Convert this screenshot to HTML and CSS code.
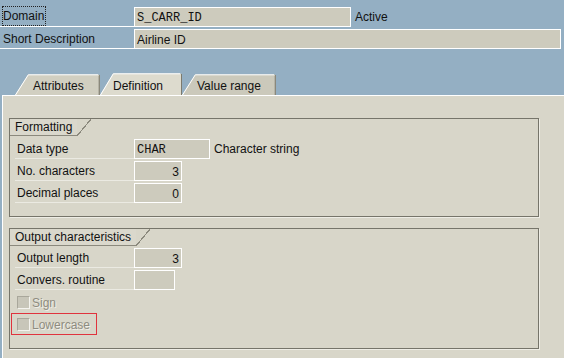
FILE: index.html
```html
<!DOCTYPE html>
<html>
<head>
<meta charset="utf-8">
<link rel="stylesheet" href="styles.css">
</head>
<body>
<div class="header">
  <div class="hrow">
    <div class="hlabel"><span class="focus">Domain</span></div>
    <div class="field mono w-domain">S_CARR_ID</div>
    <div class="status">Active</div>
  </div>
  <div class="hrow">
    <div class="hlabel">Short Description</div>
    <div class="field w-desc">Airline ID</div>
  </div>
</div>

<div class="tabs">
  <div class="tab inactive w-attr">
    <svg class="tab-bg" width="85" height="21" viewBox="0 0 85 21">
      <polygon points="0,21 13,0.5 84,0.5 84,21" fill="#d1cfc1"/>
      <polyline points="0.5,21 13.3,0.8 83,0.8" fill="none" stroke="#ffffff" stroke-width="1"/>
      <line x1="84.5" y1="1" x2="84.5" y2="21" stroke="#8a887b"/>
      <line x1="83.5" y1="2" x2="83.5" y2="21" stroke="#b5b3a6"/>
    </svg>
    <span class="tab-text">Attributes</span>
  </div>
  <div class="tab active w-def">
    <svg class="tab-bg" width="82" height="22" viewBox="0 0 82 22">
      <polygon points="0,22 13,0.5 81,0.5 81,22" fill="#dddbce"/>
      <polyline points="0.5,22 13.3,0.8 80,0.8" fill="none" stroke="#ffffff" stroke-width="1"/>
      <line x1="81.5" y1="1" x2="81.5" y2="22" stroke="#7c7a6e"/>
    </svg>
    <span class="tab-text">Definition</span>
  </div>
  <div class="tab inactive w-val">
    <svg class="tab-bg" width="94" height="21" viewBox="0 0 94 21">
      <polygon points="0,21 13,0.5 93,0.5 93,21" fill="#cbc9bb"/>
      <polyline points="0.5,21 13.3,0.8 92,0.8" fill="none" stroke="#ffffff" stroke-width="1"/>
      <line x1="93.5" y1="1" x2="93.5" y2="21" stroke="#8a887b"/>
      <line x1="92.5" y1="2" x2="92.5" y2="21" stroke="#b5b3a6"/>
    </svg>
    <span class="tab-text">Value range</span>
  </div>
</div>

<div class="panel">
  <div class="group g-format">
    <div class="gtitle">Formatting</div>
    <div class="rows">
      <div class="row">
        <div class="label">Data type</div>
        <div class="field mono in-w-type">CHAR</div>
        <div class="desc">Character string</div>
      </div>
      <div class="row">
        <div class="label">No. characters</div>
        <div class="field num in-w-num">3</div>
      </div>
      <div class="row">
        <div class="label">Decimal places</div>
        <div class="field num in-w-num">0</div>
      </div>
    </div>
  </div>

  <div class="group g-output">
    <div class="gtitle">Output characteristics</div>
    <div class="rows">
      <div class="row">
        <div class="label">Output length</div>
        <div class="field num in-w-num">3</div>
      </div>
      <div class="row">
        <div class="label">Convers. routine</div>
        <div class="field in-w-conv"></div>
      </div>
      <div class="check-row">
        <span class="checkbox"></span><span class="check-text">Sign</span>
      </div>
      <div class="check-row highlighted">
        <span class="checkbox"></span><span class="check-text">Lowercase</span>
      </div>
    </div>
  </div>
</div>
</body>
</html>
```

FILE: styles.css
```css
html, body {
  margin: 0;
  padding: 0;
}

body {
  width: 564px;
  height: 358px;
  overflow: hidden;
  background: #94afc3;
  font-family: "Liberation Sans", Arial, sans-serif;
  font-size: 12px;
  color: #111;
}

.header {
  padding-top: 7px;
  display: flex;
  flex-direction: column;
  gap: 2px;
}

.hrow {
  display: flex;
  align-items: stretch;
  height: 20px;
}

.hlabel {
  box-sizing: border-box;
  width: 134px;
  height: 20px;
  border-bottom: 1px solid #ffffff;
  padding-left: 3px;
  line-height: 21px;
}

.focus {
  display: inline-block;
  box-sizing: border-box;
  height: 20px;
  border: 1px dotted #222;
  line-height: 19px;
  padding: 0 1px 0 0;
  margin-top: -1px;
  margin-left: -1px;
  vertical-align: top;
}

.field {
  box-sizing: border-box;
  height: 20px;
  border: 1px solid #ffffff;
  background: #cdcbbd;
  padding: 0 2px;
  line-height: 20px;
  white-space: nowrap;
  overflow: hidden;
}

.mono {
  font-family: "Liberation Mono", "Courier New", monospace;
  font-size: 12px;
}

.num {
  text-align: right;
}

.w-domain { width: 217px; }
.w-desc { width: 427px; }

.status {
  padding-left: 4px;
  line-height: 21px;
}

/* Tabs */
.tabs {
  margin-top: 24px;
  padding-left: 15px;
  height: 22px;
  display: flex;
  align-items: flex-end;
}

.tab {
  position: relative;
  display: flex;
  align-items: flex-start;
}

.tab.inactive { height: 21px; }
.tab.active { height: 22px; }

.tab-bg {
  position: absolute;
  left: 0;
  top: 0;
  display: block;
}

.tab-text {
  position: relative;
  line-height: 20px;
  padding-top: 2px;
}

.tab.active .tab-text {
  padding-top: 3px;
}

.w-attr { width: 85px; }
.w-attr .tab-text { padding-left: 18px; }
.w-def { width: 82px; }
.w-def .tab-text { padding-left: 13px; }
.w-val { width: 94px; }
.w-val .tab-text { padding-left: 15px; }

/* Panel */
.panel {
  margin-left: 2px;
  box-sizing: border-box;
  height: 263px;
  background: #d8d6c9;
  border-top: 1px solid #ffffff;
  border-left: 1px solid #ffffff;
  padding: 22px 0 0 6px;
}

.group {
  box-sizing: border-box;
  width: 530px;
  border: 1px solid #76756a;
  box-shadow: 1px 1px 0 #eeede5;
  padding-bottom: 13px;
}

.g-output {
  margin-top: 11px;
}

.gtitle {
  position: relative;
  display: inline-block;
  height: 16px;
  line-height: 17px;
  padding: 0 19px 0 5px;
  border-bottom: 1px solid #8b897d;
  background: #dad8cc;
}

.gtitle::after {
  content: "";
  position: absolute;
  right: 0;
  top: 0;
  width: 14px;
  height: 17px;
  background: linear-gradient(to bottom right, #d8d6c9 calc(50% - 0.6px), #8b897d calc(50% - 0.6px), #8b897d calc(50% + 0.6px), #d8d6c9 calc(50% + 0.6px));
}

.rows {
  margin-top: 3px;
  display: flex;
  flex-direction: column;
  gap: 2px;
}

.g-output .rows {
  margin-top: 2px;
}

.row {
  display: flex;
  height: 20px;
  align-items: stretch;
}

.label {
  box-sizing: border-box;
  width: 119px;
  margin-left: 5px;
  padding-left: 2px;
  border-bottom: 1px solid #ebeae2;
  line-height: 21px;
}

.desc {
  padding-left: 4px;
  line-height: 21px;
}

.in-w-type { width: 76px; }
.in-w-num { width: 48px; }
.in-w-conv { width: 41px; }

.check-row {
  box-sizing: border-box;
  display: inline-flex;
  align-self: flex-start;
  align-items: center;
  height: 20px;
  margin-left: 1px;
  padding: 0 6px 0 5px;
  border: 1px solid transparent;
}

.check-row.highlighted {
  height: 22px;
  margin-top: -1px;
  border-color: #e0333d;
}

.checkbox {
  box-sizing: border-box;
  width: 13px;
  height: 13px;
  background: #c8c6b9;
  border: 1px solid;
  border-color: #a9a79b #f4f3ee #f4f3ee #a9a79b;
}

.check-text {
  padding-left: 2px;
  padding-top: 1px;
  color: #8e8c80;
  text-shadow: 1px 1px 0 #f0efe8;
}
```
